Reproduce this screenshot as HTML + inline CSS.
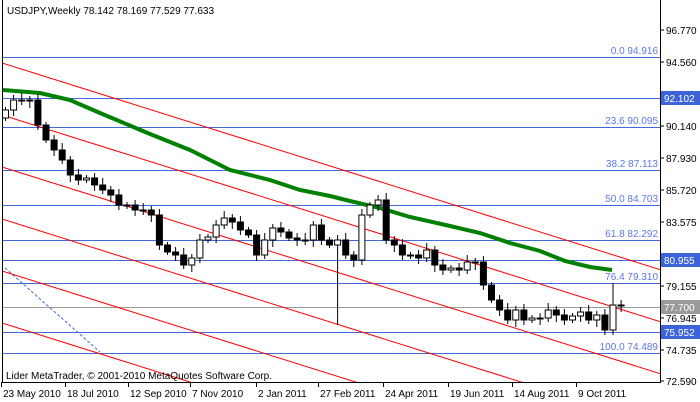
<!DOCTYPE html>
<html><head><meta charset="utf-8"><style>
html,body{margin:0;padding:0;background:#fff;width:700px;height:402px;overflow:hidden}
svg{display:block;font-family:"Liberation Sans",sans-serif;overflow:hidden}
</style></head><body>
<svg id="c" width="700" height="402" viewBox="0 0 700 402" xmlns="http://www.w3.org/2000/svg">
<defs><clipPath id="cp"><rect x="2" y="0" width="658" height="382"/></clipPath></defs>
<rect width="700" height="402" fill="#fff"/>
<g stroke="#4169d9" stroke-width="1">
<line x1="2" y1="57.5" x2="660" y2="57.5"/>
<line x1="2" y1="98.5" x2="660" y2="98.5"/>
<line x1="2" y1="127.5" x2="660" y2="127.5"/>
<line x1="2" y1="170.5" x2="660" y2="170.5"/>
<line x1="2" y1="205.5" x2="660" y2="205.5"/>
<line x1="2" y1="240.5" x2="660" y2="240.5"/>
<line x1="2" y1="260.5" x2="660" y2="260.5"/>
<line x1="2" y1="283.5" x2="660" y2="283.5"/>
<line x1="2" y1="332.5" x2="660" y2="332.5"/>
<line x1="2" y1="353.5" x2="660" y2="353.5"/>
</g>
<line x1="2" y1="307.5" x2="660" y2="307.5" stroke="#9a9a9a"/>
<line x1="5" y1="268" x2="100" y2="352" stroke="#4169d9" stroke-dasharray="3,2"/>
<g stroke="#ff0000" stroke-width="1" id="red" clip-path="url(#cp)"></g>
<polyline fill="none" stroke="#008000" stroke-width="4" points="3,90 40,93 70,100 100,113 150,134 190,150 230,170 270,180 300,190 330,196 350,201 380,208 410,217 450,226 480,233 510,243 540,251 565,261 590,267 612,270"/>
<g id="cd"></g>
<g font-size="10" fill="#5b78e6" text-anchor="end">
<text x="658" y="54">0.0 94.916</text>
<text x="658" y="124">23.6 90.095</text>
<text x="658" y="167">38.2 87.113</text>
<text x="658" y="202">50.0 84.703</text>
<text x="658" y="237">61.8 82.292</text>
<text x="658" y="280">76.4 79.310</text>
<text x="658" y="350">100.0 74.489</text>
</g>
<line x1="2.5" y1="0" x2="2.5" y2="382" stroke="#000"/>
<line x1="660.5" y1="0" x2="660.5" y2="383" stroke="#000"/>
<line x1="2" y1="382.5" x2="661" y2="382.5" stroke="#000"/>
<g font-size="10" fill="#000" id="ax"></g>
<rect x="661" y="91" width="39" height="14" fill="#3c64d8"/>
<rect x="661" y="253" width="39" height="14" fill="#3c64d8"/>
<rect x="661" y="300" width="39" height="14" fill="#9a9a9a"/>
<rect x="661" y="325" width="39" height="14" fill="#3c64d8"/>
<g font-size="10" fill="#fff">
<text x="664" y="102">92.102</text>
<text x="664" y="264">80.955</text>
<text x="664" y="311">77.700</text>
<text x="664" y="336">75.952</text>
</g>
<text x="7" y="14" font-size="10" fill="#000">USDJPY,Weekly  78.142 78.169 77.529 77.633</text>
<text x="6" y="379" font-size="10" fill="#000">Lider MetaTrader, © 2001-2010 MetaQuotes Software Corp.</text>
</svg>
<script>
var NS="http://www.w3.org/2000/svg";
function el(p,t,a,txt){var e=document.createElementNS(NS,t);for(var k in a)e.setAttribute(k,a[k]);if(txt)e.textContent=txt;p.appendChild(e);return e;}
var red=document.getElementById("red");
[63,115,167,219,271,323].forEach(function(b){el(red,"line",{x1:2,y1:b,x2:660,y2:b+0.314*658});});
var ys=[110,100,100,100,125,140,150,160,175,180,178,185,190,195,205,205,210,210,215,245,252,255,265,258,240,237,225,218,222,230,235,255,240,228,232,238,240,240,225,240,245,240,255,260,215,205,200,240,245,255,255,258,250,265,270,268,270,262,262,285,300,310,320,310,320,318,318,310,315,320,316,312,320,315,330,305,305];
var cd=document.getElementById("cd");var prev=118;
ys.forEach(function(c,i){var x=5+i*8.1;var o=prev;var top=Math.min(o,c),bot=Math.max(o,c);
if(bot-top<1)bot=top+1;
var hi=top-3-(i*7%5),lo=bot+3+(i*3%5);
if(i==41){lo=325;} if(i==75){hi=283;lo=335;}
el(cd,"line",{x1:x+0.5,y1:hi,x2:x+0.5,y2:lo,stroke:"#000"});
el(cd,"rect",{x:x-2.5,y:top,width:6,height:bot-top,fill:c<o?"#fff":"#000",stroke:"#000"});prev=c;});
var ax=document.getElementById("ax");
[["96.770",30],["94.560",62],["90.140",126],["87.930",158],["85.720",190],["83.575",222],["79.155",286],["76.945",318],["74.735",350],["72.590",381]].forEach(function(a){
el(ax,"line",{x1:660,y1:a[1],x2:664,y2:a[1],stroke:"#000"});el(ax,"text",{x:666,y:a[1]+4},a[0]);});
[["23 May 2010",3],["18 Jul 2010",67],["12 Sep 2010",130],["7 Nov 2010",192],["2 Jan 2011",258],["27 Feb 2011",320],["24 Apr 2011",385],["19 Jun 2011",450],["14 Aug 2011",514],["9 Oct 2011",578]].forEach(function(a){
el(ax,"line",{x1:a[1]-1.5,y1:382,x2:a[1]-1.5,y2:387,stroke:"#000"});el(ax,"text",{x:a[1],y:397},a[0]);});
</script>
</body></html>
